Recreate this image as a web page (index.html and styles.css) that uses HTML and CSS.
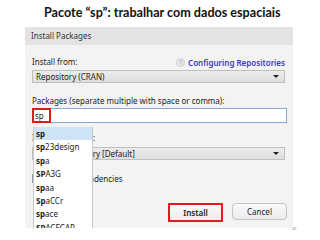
FILE: index.html
```html
<!DOCTYPE html>
<html lang="pt">
  <head>
    <meta charset="UTF-8" />
    <title>Pacote sp</title>
    <link rel="stylesheet" href="styles.css">
  </head>
  <body>
    <h1 class="slide-title">Pacote “sp”: trabalhar com dados espaciais</h1>

    <div class="dialog">
      <div class="titlebar">Install Packages</div>

      <div class="dialog-body">
        <div class="row-between">
          <span class="label">Install from:</span>
          <a class="help-link" href="#"><span class="help-icon">?</span>Configuring Repositories</a>
        </div>
        <div class="select select-from">
          <span>Repository (CRAN)</span>
          <span class="arrow"></span>
        </div>

        <div class="label label-packages">Packages (separate multiple with space or comma):</div>
        <div class="text-input">
          <span class="typed">sp</span>
        </div>

        <div class="label label-library">Install to Library:</div>
        <div class="select select-library">
          <span>C:/R/R-3.2/library [Default]</span>
          <span class="arrow"></span>
        </div>

        <label class="check-row">
          <span class="checkbox"></span>
          <span>Install dependencies</span>
        </label>

        <div class="buttons">
          <div class="btn-highlight">
            <button class="btn btn-default">Install</button>
          </div>
          <button class="btn">Cancel</button>
        </div>
      </div>

      <ul class="suggestions">
        <li class="active"><b>sp</b></li>
        <li><b>sp</b>23design</li>
        <li><b>sp</b>a</li>
        <li><b>SP</b>A3G</li>
        <li><b>sp</b>aa</li>
        <li><b>Sp</b>aCCr</li>
        <li><b>sp</b>ace</li>
        <li><b>SP</b>ACECAP</li>
      </ul>
    </div>

    <span class="slide-number">46</span>
  </body>
</html>
```

FILE: styles.css
```css
body {
  margin: 0;
  width: 320px;
  height: 240px;
  overflow: hidden;
  background-color: #ffffff;
  font-family: "Noto Sans", "Open Sans", sans-serif;
  position: relative;
}

.slide-title {
  margin: 0;
  padding: 5px 0 0 44px;
  height: 22px;
  font-family: "Lato", "Open Sans", sans-serif;
  font-size: 12.6px;
  font-weight: bold;
  line-height: 15px;
  color: #111;
}

.dialog {
  position: relative;
  margin-left: 25px;
  width: 268px;
  height: 201px;
  display: flex;
  flex-direction: column;
  background-color: #f3f3f3;
  overflow: hidden;
  font-size: 8px;
  color: #222;
}

.titlebar {
  height: 18px;
  line-height: 18px;
  padding-left: 6px;
  background-color: #e3e3e3;
  color: #333;
}

.dialog-body {
  flex: 1;
  display: flex;
  flex-direction: column;
  padding: 11px 6px 6px 7px;
}

.label {
  line-height: 12px;
}

.row-between {
  display: flex;
  justify-content: space-between;
  align-items: center;
  height: 12px;
  padding-right: 2px;
}

.help-link {
  display: flex;
  align-items: center;
  gap: 3px;
  color: #3b3bc4;
  font-weight: 600;
  text-decoration: none;
}

.help-icon {
  width: 7px;
  height: 7px;
  border-radius: 50%;
  background-color: #e6e6e6;
  border: 1px solid #d0d0d0;
  color: #999;
  font-size: 5px;
  line-height: 7px;
  text-align: center;
  font-weight: normal;
}

.select {
  display: flex;
  justify-content: space-between;
  align-items: center;
  height: 11px;
  padding: 0 5px 0 3px;
  border: 1px solid #bfbfbf;
  background: linear-gradient(#ececec, #dedede);
  margin-right: 2px;
}

.select-from {
  margin-top: 2px;
}

.select-library {
  margin-top: 3px;
}

.arrow {
  width: 0;
  height: 0;
  border-left: 3px solid transparent;
  border-right: 3px solid transparent;
  border-top: 3px solid #222;
}

.label-packages {
  margin-top: 12px;
}

.text-input {
  margin-top: 1px;
  height: 13px;
  border: 1px solid #86a9d6;
  background-color: #ffffff;
  display: flex;
  align-items: center;
}

.typed {
  height: 11px;
  width: 14px;
  border: 2px solid #e2191e;
  margin-left: -1px;
  line-height: 11px;
  padding-left: 1px;
}

.label-library {
  margin-top: 9px;
}

.check-row {
  margin-top: 12px;
  display: flex;
  align-items: center;
  gap: 4px;
  height: 12px;
}

.checkbox {
  width: 7px;
  height: 7px;
  border: 1px solid #999;
  background-color: #ffffff;
}

.buttons {
  margin-top: auto;
  display: flex;
  justify-content: flex-end;
  gap: 9px;
}

.btn {
  width: 55px;
  height: 17px;
  border: 1px solid #c4c4c4;
  border-radius: 4px;
  background: linear-gradient(#f9f9f9, #ececec);
  font-family: "Noto Sans", "Open Sans", sans-serif;
  font-size: 8px;
  color: #222;
  padding: 0;
}

.btn-highlight {
  border: 2px solid #e2191e;
  height: 15px;
  display: flex;
}

.btn-default {
  width: 51px;
  height: 15px;
  border: none;
  border-radius: 0;
  font-weight: 600;
}

.suggestions {
  position: absolute;
  left: 8px;
  top: 100px;
  width: 58px;
  margin: 0;
  padding: 0;
  list-style: none;
  background-color: #ffffff;
  border: 1px solid #c8c8c8;
  border-top: none;
}

.suggestions li {
  height: 13.4px;
  line-height: 13.4px;
  padding-left: 2px;
  color: #222;
}

.suggestions li.active {
  background-color: #cfe3f7;
}

.slide-number {
  position: absolute;
  left: 292px;
  top: 226px;
  font-size: 4px;
  color: #999;
}
```
